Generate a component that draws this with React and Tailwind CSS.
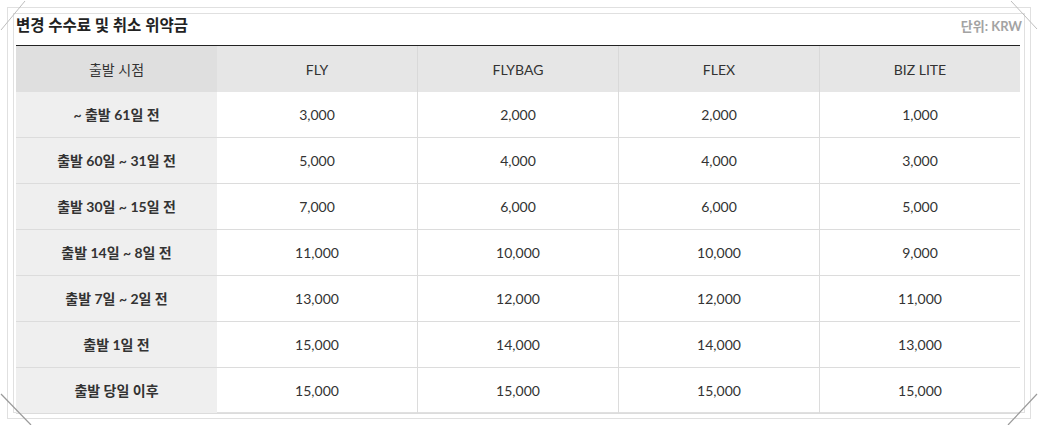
const columns = ['FLY', 'FLYBAG', 'FLEX', 'BIZ LITE']

const rows = [
  { label: '~ 출발 61일 전', fees: ['3,000', '2,000', '2,000', '1,000'] },
  { label: '출발 60일 ~ 31일 전', fees: ['5,000', '4,000', '4,000', '3,000'] },
  { label: '출발 30일 ~ 15일 전', fees: ['7,000', '6,000', '6,000', '5,000'] },
  { label: '출발 14일 ~ 8일 전', fees: ['11,000', '10,000', '10,000', '9,000'] },
  { label: '출발 7일 ~ 2일 전', fees: ['13,000', '12,000', '12,000', '11,000'] },
  { label: '출발 1일 전', fees: ['15,000', '14,000', '14,000', '13,000'] },
  { label: '출발 당일 이후', fees: ['15,000', '15,000', '15,000', '15,000'] },
]

function CornerMarks() {
  // decorative page-corner strokes around the frame
  return (
    <svg className="pointer-events-none absolute inset-0" width="1038" height="425" viewBox="0 0 1038 425">
      <line x1="1" y1="30" x2="25" y2="1" stroke="#bdbdbd" strokeWidth="1" />
      <line x1="1011" y1="1" x2="1037" y2="29" stroke="#bdbdbd" strokeWidth="1" />
      <line x1="1" y1="394" x2="31" y2="425" stroke="#9a9a9a" strokeWidth="1.2" />
      <line x1="1037" y1="394" x2="1008" y2="425" stroke="#9a9a9a" strokeWidth="1.2" />
    </svg>
  )
}

export default function App() {
  return (
    <div
      className="relative w-[1038px] h-[425px] bg-white overflow-hidden text-[#333]"
      style={{ fontFamily: 'Lato, "Noto Sans CJK KR", sans-serif' }}
    >
      <div className="ml-[7px] mt-[7px] w-[1024px] h-[412px] border border-[#e0e0e0] p-[5px]">
        <div className="h-full border border-[#e0e0e0] px-[2px]">
          {/* Title */}
          <div className="flex items-start justify-between h-[31px]">
            <h3 className="text-[15.5px] leading-[22px] font-bold text-[#222]">변경 수수료 및 취소 위약금</h3>
            <span className="text-[13px] leading-[22px] font-bold text-[#a3a3a3] mt-[1px]">단위: KRW</span>
          </div>

          {/* Table */}
          <div className="w-[1004px] border-t border-[#222]">
            <div className="grid grid-cols-[201px_200px_201px_201px_201px] h-[46px] bg-[#e6e6e6] text-[14px]">
              <div className="flex items-center justify-center bg-[#dfdfdf]">출발 시점</div>
              {columns.map((col, i) => (
                <div
                  key={col}
                  className={
                    i === 0
                      ? 'flex items-center justify-center'
                      : 'flex items-center justify-center border-l border-[#d9d9d9]'
                  }
                >
                  {col}
                </div>
              ))}
            </div>

            {rows.map((row) => (
              <div
                key={row.label}
                className="grid grid-cols-[201px_200px_201px_201px_201px] h-[46px] border-b border-[#dcdcdc] text-[14px]"
              >
                <div className="flex items-center justify-center bg-[#efefef] font-bold text-[#333]">
                  {row.label}
                </div>
                {row.fees.map((fee, i) => (
                  <div
                    key={i}
                    className={
                      i === 0
                        ? 'flex items-center justify-center'
                        : 'flex items-center justify-center border-l border-[#dcdcdc]'
                    }
                  >
                    {fee}
                  </div>
                ))}
              </div>
            ))}
          </div>
        </div>
      </div>

      <CornerMarks />
    </div>
  )
}
